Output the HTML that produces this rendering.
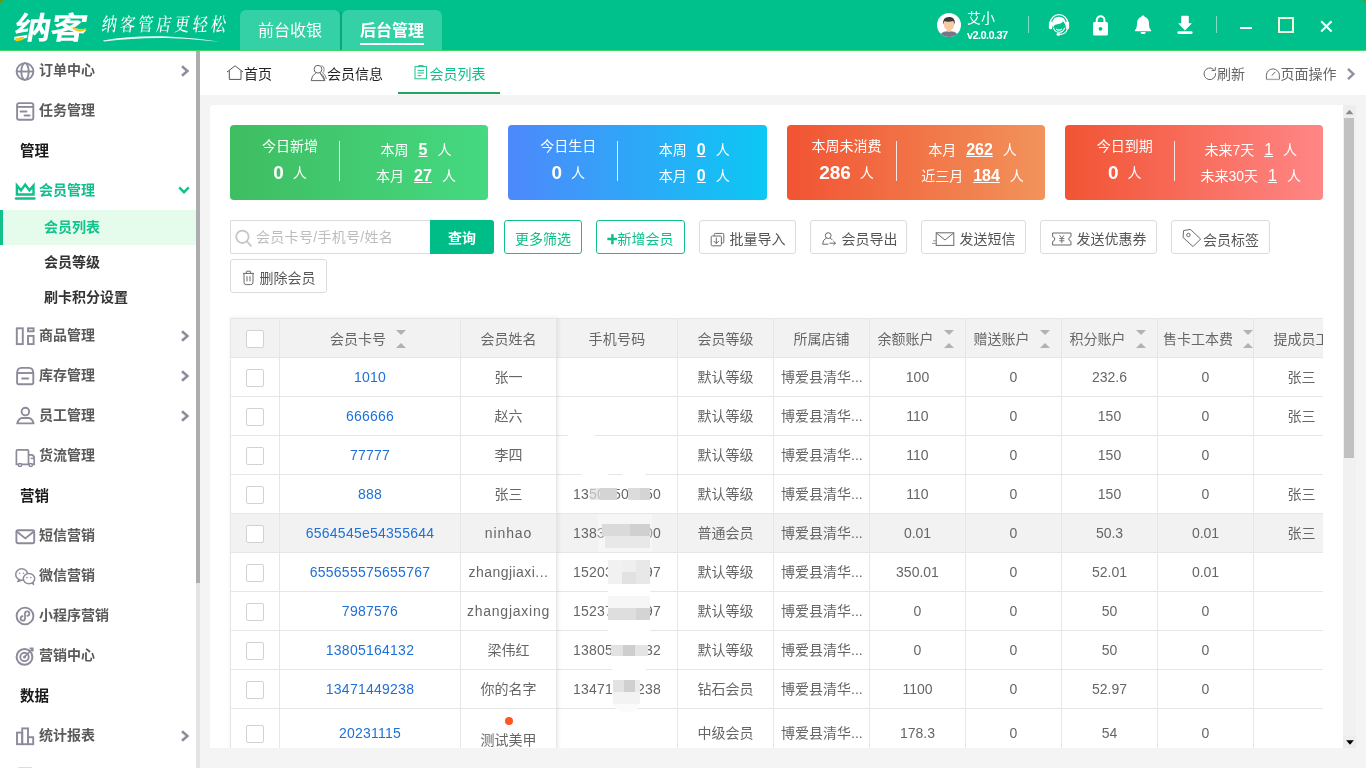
<!DOCTYPE html>
<html lang="zh-CN">
<head>
<meta charset="utf-8">
<title>会员列表</title>
<style>
*{box-sizing:border-box;margin:0;padding:0}
html,body{width:1366px;height:768px;overflow:hidden}
body{position:relative;background:#f4f4f4;font-family:"Liberation Sans","Noto Sans CJK SC",sans-serif;font-size:14px;color:#666;-webkit-font-smoothing:antialiased}
#root{position:absolute;left:0;top:0;width:1366px;height:768px;will-change:transform}
.abs{position:absolute}
svg{display:block;overflow:visible}
/* ---------- header ---------- */
#hd{position:absolute;left:0;top:0;width:1366px;height:50px;background:#00c08b;border-radius:5px 5px 0 0}
#hdline{position:absolute;left:0;top:50px;width:1366px;height:1px;background:#3dd56c}
.toptab{position:absolute;top:10px;height:40px;width:100px;background:#33d1a5;border-radius:6px 6px 0 0;color:#fff;font-size:16px;text-align:center;line-height:42px}
.toptab b{font-weight:700}
/* ---------- sidebar ---------- */
#side{position:absolute;left:0;top:51px;width:196px;height:717px;background:#fff;overflow:hidden}
#sbar{position:absolute;left:196px;top:51px;width:4px;height:717px;background:#e4e4e4}
#sbar i{position:absolute;left:0;top:0;width:4px;height:532px;background:#adadad}
.mi{position:absolute;left:0;width:196px;height:40px;line-height:40px;color:#5a5a5a;font-weight:700;font-size:14px}
.mi span{position:absolute;left:39px;top:0;white-space:nowrap}
.mi svg.ic{position:absolute;left:15px;top:11px;width:20px;height:20px}
.mi svg.ar{position:absolute;left:179px;top:15px;width:12px;height:12px}
.sec{position:absolute;left:20px;color:#1a1a1a;font-weight:700;font-size:14.5px;line-height:42px;height:40px}
.sub{position:absolute;left:0;width:196px;height:35px;line-height:35px;color:#333;font-weight:700}
.sub span{position:absolute;left:44px;top:0;white-space:nowrap}
/* ---------- page tabs ---------- */
#tabs{position:absolute;left:200px;top:51px;width:1166px;height:44px;background:#fff}
.pt{position:absolute;top:0;height:44px;line-height:46px;font-size:14px;color:#333;white-space:nowrap}
/* ---------- card ---------- */
#card{position:absolute;left:210px;top:105px;width:1133px;height:643px;background:#fff;border-radius:3px 0 0 0;overflow:hidden}
#vs{position:absolute;left:1343px;top:105px;width:13px;height:643px;background:#f1f1f1}

/* ---------- stat cards ---------- */
.st{position:absolute;top:20px;width:258.25px;height:75px;border-radius:4px;color:#fff;font-size:14px}
.st .l{position:absolute;left:0;top:0;width:120px;text-align:center}
.st .l .t{position:absolute;left:0;top:9px;width:120px;height:24px;line-height:24px;white-space:nowrap}
.st .l .n{position:absolute;left:0;top:34px;width:120px;height:28px;line-height:28px;white-space:nowrap}
.st .l .n b{font-size:19px;font-weight:700;margin-right:9px;vertical-align:-1px}
.st .dv{position:absolute;left:109px;top:16px;width:1px;height:40px;background:#fff;opacity:.85}
.st .r{position:absolute;left:110px;top:0;width:152px;text-align:center;white-space:nowrap}
.st .r div{position:absolute;left:0;width:152px;height:27px;line-height:27px}
.st .r b{font-size:16px;font-weight:700;text-decoration:underline;margin:0 10px;vertical-align:-.5px}
.st .r b.n{font-weight:400}

/* ---------- toolbar ---------- */
.btn{position:absolute;height:34px;border:1px solid #dcdcdc;border-radius:3px;background:#fff;color:#555;font-size:14px;white-space:nowrap}
.btn span{position:absolute;top:0;height:32px;line-height:36px}
.btn svg{position:absolute}
.btn.g{border-color:#12c08b;color:#0dbf8b}

/* ---------- table ---------- */
#tb{position:absolute;left:20px;top:213px;width:1093px;height:440px;overflow:hidden;border-left:1px solid #e6e6e6;border-top:1px solid #e6e6e6}
.tr{position:absolute;left:0;width:1120px;height:39px;border-bottom:1px solid #e6e6e6;background:#fff}
.tr.h{background:#f2f2f2}
.tr.hv{background:#f2f2f2}
.tr>div{position:absolute;top:0;height:100%;border-right:1px solid #e6e6e6;text-align:center;line-height:39px;white-space:nowrap;overflow:hidden;color:#666}
.c0{left:0;width:49px}.c1{left:49px;width:181px}.c2{left:230px;width:96px}.c3{left:326px;width:121px}.c4{left:447px;width:96px}
.c5{left:543px;width:96px}.c6{left:639px;width:96px}.c7{left:735px;width:96px}.c8{left:831px;width:96px}.c9{left:927px;width:96px}.c10{left:1023px;width:96px}
.c0 i{position:absolute;left:15px;top:10.5px;width:18px;height:18px;border:1px solid #d2d2d2;border-radius:2px;background:#fff}
.c1 a{color:#1e70d8;text-decoration:none;letter-spacing:.25px}
.tr>div.c5{text-align:left;padding-left:7px}
.tr.h>div.c5{text-align:center;padding-left:0}
.tr.h>div.c9{text-align:left;padding-left:5px}
.tr.h>div{line-height:40px}
.tr.t>div{line-height:48px}
.so{display:inline-block;position:relative;width:10px;height:19px;margin-left:10px;margin-right:4px;vertical-align:-5px}
.so:before{content:"";position:absolute;left:0;top:0;border:5px solid transparent;border-top:5px solid #b2b2b2;border-bottom:0}
.so:after{content:"";position:absolute;left:0;top:13px;border:5px solid transparent;border-bottom:5px solid #b2b2b2;border-top:0}
#fx{position:absolute;left:20px;top:213px;width:327px;height:440px;pointer-events:none;box-shadow:1px 0 4px rgba(0,0,0,.09)}
#blur i{position:absolute;display:block}
.c3{letter-spacing:.2px}
</style>
</head>
<body>
<div id="root">
<div class="abs" style="left:0;top:0;width:1366px;height:6px;background:#6f9500"></div>
<div id="hd">
  <div class="abs" id="logo" style="left:15px;top:4px;width:76px;height:44px;color:#fff;font-family:'Noto Sans CJK SC',sans-serif;font-weight:700;font-size:31px;line-height:44px;white-space:nowrap;transform-origin:0 50%;transform:scaleX(1.2) skewX(-8deg);letter-spacing:-1px">纳客</div>
  <svg class="abs" style="left:0;top:0" width="240" height="50" viewBox="0 0 240 50">
    <path d="M15 38.5 L24 36.5 L23 40 L16 41.5 Z" fill="#f5c518"/>
    <path d="M73 26.5 Q78 31 86 28 L85.5 30.5 Q78 33.5 72.5 28.5 Z" fill="#f5c518"/>
    <path d="M103 40.6 C125 36.5 150 35.6 172 36.8 C190 37.8 207 39.6 219 41.8 C205 40.2 190 38.8 172 38.2 C150 37.5 126 38.6 104 41.6 Z" fill="#fff" opacity=".92"/>
  </svg>
  <div class="abs" id="slogan" style="left:101.5px;top:10.5px;width:134px;height:24px;line-height:24px;color:#fff;font-family:'Noto Serif CJK SC','Noto Sans CJK SC',serif;font-weight:500;font-size:15px;letter-spacing:3.2px;white-space:nowrap;transform-origin:0 50%;transform:scaleY(1.25) skewX(-10deg)">纳客管店更轻松</div>
  <div class="abs" style="left:340px;top:12px;width:2px;height:38px;background:#0aa777"></div>
  <div class="toptab" style="left:240px">前台收银</div>
  <div class="toptab" style="left:342px"><b>后台管理</b><i class="abs" style="left:18px;top:33px;width:64px;height:2px;background:#fff"></i></div>
  <!-- avatar -->
  <svg class="abs" style="left:937px;top:13px" width="24" height="24" viewBox="0 0 24 24">
    <defs><clipPath id="avc"><circle cx="12" cy="12" r="12"/></clipPath></defs>
    <circle cx="12" cy="12" r="12" fill="#fff"/>
    <g clip-path="url(#avc)">
      <path d="M2.5 24 C3 19.5 7 18.3 12 18.3 C17 18.3 21 19.5 21.5 24 Z" fill="#77778a"/>
      <path d="M10 15 L14 15 L14 18.2 Q12 19.8 10 18.2 Z" fill="#f1bf95"/>
      <ellipse cx="12" cy="11.6" rx="5.2" ry="5.9" fill="#f6cba3"/>
      <path d="M6.3 11.5 C5.6 7 7.5 4 12 4 C16.5 4 18.4 6.6 17.7 11.5 C17 9.8 16.6 8.8 16.2 8 C13.5 9 9.5 9 7.4 8.3 C7 9.2 6.7 10.2 6.3 11.5 Z" fill="#3a3a3c"/>
    </g>
  </svg>
  <div class="abs" style="left:967px;top:8px;height:20px;line-height:20px;color:#fff;font-size:14px;white-space:nowrap">艾小</div>
  <div class="abs" style="left:967px;top:27px;height:16px;line-height:16px;color:#fff;font-size:11px;font-weight:700;letter-spacing:-.6px;white-space:nowrap">v2.0.0.37</div>
  <div class="abs" style="left:1028px;top:16px;width:1px;height:17px;background:#7fdcc2"></div>
  <div class="abs" style="left:1216px;top:16px;width:1px;height:17px;background:#7fdcc2"></div>
  <!-- headset -->
  <svg class="abs" style="left:1047px;top:12px" width="24" height="26" viewBox="0 0 24 26">
    <path d="M3.2 11.5 A8.8 8.8 0 0 1 20.8 11.5" fill="none" stroke="#fff" stroke-width="1.3"/>
    <rect x="1.9" y="9.6" width="3.4" height="7.6" rx="1.4" fill="#fff"/>
    <rect x="18.7" y="9.6" width="3.4" height="7.6" rx="1.4" fill="#fff"/>
    <path d="M5 12.5 C5 7.5 8 4.8 12 4.8 C16 4.8 19 7.5 19 12.5 C19 13 18.9 13.6 18.8 14.1 C18.2 12.2 17.3 10.6 15.8 9.3 C15.3 11.1 13.3 12 10.6 12.2 C8.4 12.4 7 13.4 6.6 15 C5.6 14.6 5 13.6 5 12.5 Z" fill="#fff"/>
    <path d="M6.4 15.6 C7.2 18.6 9.3 20.3 12 20.3 C14.6 20.3 16.7 18.8 17.6 16" fill="none" stroke="#fff" stroke-width="1.1"/>
    <path d="M9.4 17.2 Q12 19 14.6 17.2" fill="none" stroke="#fff" stroke-width="1.1" stroke-linecap="round"/>
    <path d="M20.4 16.5 C19.8 20 16.5 22.3 12.4 22.4" fill="none" stroke="#fff" stroke-width="1.2"/>
    <ellipse cx="11.4" cy="22.4" rx="1.9" ry="1.4" fill="#fff"/>
  </svg>
  <!-- lock -->
  <svg class="abs" style="left:1091px;top:13px" width="20" height="24" viewBox="0 0 20 24">
    <path d="M5.7 10 V7.2 A3.9 3.9 0 0 1 13.5 7.2 V10" fill="none" stroke="#fff" stroke-width="2"/>
    <rect x="2" y="9" width="15" height="13.6" rx="1.6" fill="#fff"/>
    <circle cx="9.5" cy="15.8" r="1.9" fill="#00bf8b"/>
  </svg>
  <!-- bell -->
  <svg class="abs" style="left:1133px;top:13px" width="20" height="24" viewBox="0 0 20 24">
    <path d="M10 2.4 C10.9 2.4 11.5 3 11.6 3.8 C14.6 4.7 16 7.2 16 10.4 C16 13.6 16.6 15.6 18.1 17.2 L18.1 18.2 L1.9 18.2 L1.9 17.2 C3.4 15.6 4 13.6 4 10.4 C4 7.2 5.4 4.7 8.4 3.8 C8.5 3 9.1 2.4 10 2.4 Z" fill="#fff"/>
    <path d="M7.8 18.9 H12.6 V19.6 Q12.6 20.9 11.3 20.9 H9.1 Q7.8 20.9 7.8 19.6 Z" fill="#fff"/>
  </svg>
  <!-- download -->
  <svg class="abs" style="left:1175px;top:13px" width="20" height="24" viewBox="0 0 20 24">
    <path d="M6.2 3.8 Q6.2 2.8 7.2 2.8 H12.8 Q13.8 2.8 13.8 3.8 V10.3 H16.9 L10 17.4 L3.1 10.3 H6.2 Z" fill="#fff"/>
    <rect x="2.4" y="18.3" width="15.2" height="2.8" rx="1.3" fill="#fff"/>
  </svg>
  <!-- window controls -->
  <div class="abs" style="left:1240px;top:27px;width:12px;height:2px;background:#fff"></div>
  <div class="abs" style="left:1278px;top:17px;width:16px;height:16px;border:2px solid #f3f7d8"></div>
  <svg class="abs" style="left:1320px;top:20px" width="13" height="13" viewBox="0 0 13 13"><path d="M1.2 1.2 L11.6 11.6 M11.6 1.2 L1.2 11.6" stroke="#fff" stroke-width="2.1" fill="none"/></svg>
</div>
<div id="hdline"></div>
<div id="side">
<div class="mi" style="top:-1px"><svg class="ic" viewBox="0 0 20 20" fill="none" stroke="#8b8b9c" stroke-width="1.9"><circle cx="10" cy="10.5" r="8.4"/><ellipse cx="10" cy="10.5" rx="3.7" ry="8.4"/><path d="M1.6 10.5 H18.4"/></svg><span>订单中心</span><svg class="ar" viewBox="0 0 12 12"><path d="M3 1.2 L8.4 6 L3 10.8" fill="none" stroke="#8e8e9c" stroke-width="2.6"/></svg></div>
<div class="mi" style="top:39px"><svg class="ic" viewBox="0 0 20 20" fill="none" stroke="#8b8b9c" stroke-width="1.9"><rect x="2.1" y="2.1" width="16.2" height="16.6" rx="2"/><path d="M2.1 5.9 H18.3"/><path d="M5.6 10.6 H11.4 M9.6 14.6 H14.6" stroke-linecap="round" stroke-width="2"/></svg><span>任务管理</span></div>
<div class="sec" style="top:79px">管理</div>
<div class="mi" style="top:119px;color:#0fc08c"><svg class="ic" viewBox="0 0 20 20" fill="none" stroke="#0fc08c" stroke-width="1.9"><path d="M1.9 4.6 L6 9.4 L10.2 3.5 L14.4 9.4 L18.5 4.6 V13.5 H1.9 Z" stroke-width="2.4" stroke-linejoin="miter"/><path d="M1 17.6 H19.4" stroke-width="2.5" stroke-linecap="round"/></svg><span>会员管理</span><svg class="abs" style="left:178px;top:15px" width="12" height="12" viewBox="0 0 12 12"><path d="M1.2 2.4 L6 7.2 L10.8 2.4" fill="none" stroke="#0fc08c" stroke-width="2.4"/></svg></div>
<div class="sub" style="top:159px;background:#e5fcec;color:#12c38c"><i class="abs" style="left:0;top:0;width:3px;height:35px;background:#12c08b"></i><span>会员列表</span></div>
<div class="sub" style="top:194px"><span>会员等级</span></div>
<div class="sub" style="top:229px"><span>刷卡积分设置</span></div>
<div class="mi" style="top:264px"><svg class="ic" viewBox="0 0 20 20" fill="none" stroke="#8b8b9c" stroke-width="1.9"><rect x="1.8" y="2.3" width="6" height="15.8"/><rect x="13" y="2.3" width="5.6" height="3"/><rect x="13" y="9.9" width="5.6" height="8.2"/></svg><span>商品管理</span><svg class="ar" viewBox="0 0 12 12"><path d="M3 1.2 L8.4 6 L3 10.8" fill="none" stroke="#8e8e9c" stroke-width="2.6"/></svg></div>
<div class="mi" style="top:304px"><svg class="ic" viewBox="0 0 20 20" fill="none" stroke="#8b8b9c" stroke-width="1.9"><path d="M2.1 7 Q2.3 2 6.4 1.9 H14 Q18.1 2 18.3 7 V16.4 Q18.3 18.2 16.5 18.2 H3.9 Q2.1 18.2 2.1 16.4 Z"/><path d="M2.1 7 H18.3"/><path d="M7.2 12.4 H13.2" stroke-linecap="round" stroke-width="2"/></svg><span>库存管理</span><svg class="ar" viewBox="0 0 12 12"><path d="M3 1.2 L8.4 6 L3 10.8" fill="none" stroke="#8e8e9c" stroke-width="2.6"/></svg></div>
<div class="mi" style="top:344px"><svg class="ic" viewBox="0 0 20 20" fill="none" stroke="#8b8b9c" stroke-width="1.9"><circle cx="10.4" cy="5.6" r="3.8"/><path d="M2.2 17.4 Q3.6 12.2 7.2 12 H13.6 Q17.2 12.2 18.6 17.4 Z" stroke-linejoin="round"/></svg><span>员工管理</span><svg class="ar" viewBox="0 0 12 12"><path d="M3 1.2 L8.4 6 L3 10.8" fill="none" stroke="#8e8e9c" stroke-width="2.6"/></svg></div>
<div class="mi" style="top:384px"><svg class="ic" viewBox="0 0 20 20" fill="none" stroke="#8b8b9c" stroke-width="1.9"><path d="M1.4 5 Q1.4 3.9 2.5 3.9 H12.4 Q13.5 3.9 13.5 5 V18.4 H1.4 Z" stroke-width="1.7"/><path d="M13.5 8.8 H16.4 Q19.2 9 19.2 12 V18.4 H13.5" stroke-width="1.7"/><path d="M15.6 12.4 H19.2" stroke-width="1.4"/><circle cx="5" cy="19" r="1.6" fill="#fff" stroke-width="1.5"/><circle cx="15.8" cy="19" r="1.6" fill="#fff" stroke-width="1.5"/></svg><span>货流管理</span></div>
<div class="sec" style="top:424px">营销</div>
<div class="mi" style="top:464px"><svg class="ic" viewBox="0 0 20 20" fill="none" stroke="#8b8b9c" stroke-width="1.9"><rect x="1.4" y="4.2" width="17.8" height="13" rx="1.6"/><path d="M1.8 5.6 L10.3 12.4 L18.8 5.6"/></svg><span>短信营销</span></div>
<div class="mi" style="top:504px"><svg class="ic" viewBox="0 0 20 20" fill="none" stroke="#8b8b9c" stroke-width="1.9"><path d="M4.4 13.3 L2.6 15.6 L6 14.6" stroke-width="1.3" stroke-linejoin="round"/><ellipse cx="6.7" cy="8.5" rx="6" ry="5.7" stroke-width="1.5" fill="#fff"/><path d="M16.6 16.8 L18.6 18.6 L18 15.8" stroke-width="1.3" stroke-linejoin="round"/><ellipse cx="14" cy="12.6" rx="5.7" ry="5.1" stroke-width="1.5" fill="#fff"/><circle cx="4.6" cy="7.2" r=".8" fill="#8b8b9c" stroke="none"/><circle cx="8.4" cy="7.2" r=".8" fill="#8b8b9c" stroke="none"/><circle cx="12" cy="11.6" r=".8" fill="#8b8b9c" stroke="none"/><circle cx="15.8" cy="11.6" r=".8" fill="#8b8b9c" stroke="none"/></svg><span>微信营销</span></div>
<div class="mi" style="top:544px"><svg class="ic" viewBox="0 0 20 20" fill="none" stroke="#8b8b9c" stroke-width="1.9"><circle cx="10" cy="10" r="8.4" stroke-width="1.9"/><path d="M10 12.4 Q10 14.6 7.8 14.6 Q5.6 14.6 5.6 12.5 Q5.6 10.5 7.6 10.2 M10 12.4 V7.6 Q10 5.4 12.2 5.4 Q14.4 5.4 14.4 7.5 Q14.4 9.5 12.4 9.8" stroke-width="1.8" stroke-linecap="round"/></svg><span>小程序营销</span></div>
<div class="mi" style="top:584px"><svg class="ic" viewBox="0 0 20 20" fill="none" stroke="#8b8b9c" stroke-width="1.9"><circle cx="9.5" cy="10.9" r="7.9" stroke-width="2"/><circle cx="9.5" cy="10.9" r="4.2" stroke-width="1.9"/><circle cx="9.5" cy="10.9" r="1.5" fill="#8b8b9c" stroke="none"/><path d="M9.5 10.9 L17.4 3 M14.6 2.4 H17.8 V5.6" stroke-width="1.6"/></svg><span>营销中心</span></div>
<div class="sec" style="top:624px">数据</div>
<div class="mi" style="top:664px"><svg class="ic" viewBox="0 0 20 20" fill="none" stroke="#8b8b9c" stroke-width="1.9"><rect x="2" y="6.6" width="5.2" height="11.6"/><rect x="7.2" y="2.4" width="5.8" height="15.8"/><rect x="13" y="11.2" width="5.2" height="7"/></svg><span>统计报表</span><svg class="ar" viewBox="0 0 12 12"><path d="M3 1.2 L8.4 6 L3 10.8" fill="none" stroke="#8e8e9c" stroke-width="2.6"/></svg></div>
<div class="abs" style="left:17px;top:716px;width:16px;height:4px;border:1px solid #dcdce4;border-radius:2px"></div>
</div>
<div id="sbar"><i></i></div>
<div id="tabs">
  <svg class="abs" style="left:26px;top:14px" width="18" height="16" viewBox="0 0 18 16" fill="none" stroke="#555" stroke-width="1"><path d="M1 7 L9.1 .8 L17 7"/><path d="M3.3 5.6 V14.4 H15 V5.6"/></svg>
  <div class="pt" style="left:44px;color:#222">首页</div>
  <svg class="abs" style="left:110px;top:13px" width="18" height="18" viewBox="0 0 18 18" fill="none" stroke="#666" stroke-width="1"><circle cx="8" cy="5.2" r="3.9"/><path d="M1.2 16.6 Q1.6 11 5.8 9.2 M10.2 9.2 Q14.4 11 14.8 16.6 Z M1.2 16.6 H14.8"/><path d="M11.6 1.6 Q14.4 2.4 14.2 5.6 Q14 7.8 12.6 9 Q15.8 10.6 16.4 15" stroke="#888"/></svg>
  <div class="pt" style="left:127px;color:#222">会员信息</div>
  <svg class="abs" style="left:214px;top:14px" width="14" height="15" viewBox="0 0 14 15" fill="none" stroke="#1ac48c" stroke-width="1"><rect x="1" y="1.6" width="11.6" height="12.2"/><path d="M4.4 1.6 V.6 H9.2 V1.6" /><path d="M3.6 5.4 H10 M3.6 8 H10 M3.6 10.6 H7.4"/></svg>
  <div class="pt" style="left:229.5px;color:#0dbf8b">会员列表</div>
  <div class="abs" style="left:198px;top:41px;width:102px;height:2px;background:#1fa85c"></div>
  <svg class="abs" style="left:1003px;top:16px" width="14" height="14" viewBox="0 0 14 14" fill="none" stroke="#666" stroke-width="1"><path d="M10.6 2.4 A5.8 5.8 0 1 0 12.6 6.2"/><path d="M8.6 3.6 L12.2 3.4 L12.4 .2" stroke-width="1"/></svg>
  <div class="pt" style="left:1017px;color:#666">刷新</div>
  <svg class="abs" style="left:1065px;top:16px" width="16" height="14" viewBox="0 0 16 14" fill="none" stroke="#666" stroke-width="1"><path d="M1.4 12 V8.4 A6.4 6.4 0 0 1 14.4 8.4 V12"/><path d="M6.8 8.6 L10.4 4.8"/><path d="M1 12.4 H14.8" stroke="#aaa" stroke-width="1.4"/></svg>
  <div class="pt" style="left:1080.5px;color:#666">页面操作</div>
  <svg class="abs" style="left:1146px;top:17px" width="10" height="12" viewBox="0 0 10 12"><path d="M2 .8 L7.4 6 L2 11.2" fill="none" stroke="#8e8ea0" stroke-width="2.4"/></svg>
</div>
<div id="card">
<div class="st" style="left:20px;background:linear-gradient(90deg,#3fbd61,#45d981)">
  <div class="l"><div class="t">今日新增</div><div class="n"><b>0</b>人</div></div><i class="dv"></i>
  <div class="r"><div style="top:11px">本周<b>5</b>人</div><div style="top:37px">本月<b>27</b>人</div></div>
</div>
<div class="st" style="left:298.25px;background:linear-gradient(90deg,#4e88fb,#0cc8f4)">
  <div class="l"><div class="t">今日生日</div><div class="n"><b>0</b>人</div></div><i class="dv"></i>
  <div class="r"><div style="top:11px">本周<b>0</b>人</div><div style="top:37px">本月<b>0</b>人</div></div>
</div>
<div class="st" style="left:576.5px;background:linear-gradient(90deg,#f15433,#f2935b)">
  <div class="l"><div class="t">本周未消费</div><div class="n"><b>286</b>人</div></div><i class="dv"></i>
  <div class="r"><div style="top:11px">本月<b>262</b>人</div><div style="top:37px">近三月<b>184</b>人</div></div>
</div>
<div class="st" style="left:854.75px;background:linear-gradient(90deg,#f15433,#ff8686)">
  <div class="l"><div class="t">今日到期</div><div class="n"><b>0</b>人</div></div><i class="dv"></i>
  <div class="r"><div style="top:11px">未来7天<b class="n">1</b>人</div><div style="top:37px">未来30天<b class="n">1</b>人</div></div>
</div>
<!-- toolbar -->
<div class="abs" style="left:20px;top:115px;width:200px;height:34px;border:1px solid #dcdcdc;border-right:0;border-radius:2px 0 0 2px;background:#fff">
  <svg class="abs" style="left:4px;top:8px" width="18" height="18" viewBox="0 0 18 18" fill="none" stroke="#c6c6c6" stroke-width="1.8"><circle cx="7.4" cy="7.8" r="6.2"/><path d="M11.8 12.4 L16 16.8" stroke-linecap="round"/></svg>
  <span class="abs" style="left:25px;top:0;height:32px;line-height:32px;color:#bdbdbd;white-space:nowrap;letter-spacing:.3px">会员卡号/手机号/姓名</span>
</div>
<div class="abs" style="left:220px;top:115px;width:64px;height:34px;background:#00bd88;border-radius:0 3px 3px 0;color:#fff;font-weight:700;text-align:center;line-height:37px">查询</div>
<div class="btn g" style="left:294px;top:115px;width:78px"><span style="left:10px">更多筛选</span></div>
<div class="btn g" style="left:386px;top:115px;width:89px"><span style="left:10px"><b style="font-family:'Liberation Sans',sans-serif;font-size:18px;font-weight:700;-webkit-text-stroke:.5px #0dbf8b;vertical-align:-1px;display:inline-block;width:10.6px;margin-right:0">+</b>新增会员</span></div>
<div class="btn" style="left:489px;top:115px;width:97px">
  <svg style="left:10px;top:10.5px" width="16" height="16" viewBox="0 0 16 16" fill="none" stroke="#6a6a6a" stroke-width="1"><path d="M4.2 4 V2.6 Q4.2 1.4 5.4 1.4 H12.6 Q13.8 1.4 13.8 2.6 V9.8 Q13.8 11 12.6 11 H11.4"/><rect x="1.2" y="4" width="10.2" height="9.8" rx="1.2"/><path d="M6.3 5.6 V11.4 M3.8 9 L6.3 11.6 L8.8 9"/></svg>
  <span style="left:29.5px">批量导入</span></div>
<div class="btn" style="left:600px;top:115px;width:97px">
  <svg style="left:10px;top:10px" width="16" height="16" viewBox="0 0 16 16" fill="none" stroke="#6a6a6a" stroke-width="1"><circle cx="7.2" cy="4.6" r="2.9"/><path d="M5.4 7 Q1.8 8.6 1.6 13.2 H7.4 M9 7 Q10.6 7.8 11.4 9.2"/><path d="M8.6 12.2 H14.4 M12.4 10.2 L14.5 12.2 L12.4 14.2"/></svg>
  <span style="left:30.5px">会员导出</span></div>
<div class="btn" style="left:711px;top:115px;width:105px">
  <svg style="left:9px;top:10px" width="24" height="16" viewBox="0 0 24 16" fill="none" stroke="#6a6a6a" stroke-width="1"><rect x="5.2" y="1.8" width="17.6" height="12.6"/><path d="M5.6 2.2 L14 9 L22.4 2.2"/><path d="M2 9.8 H5 M1 12.4 H5" stroke="#999"/></svg>
  <span style="left:37.5px">发送短信</span></div>
<div class="btn" style="left:830px;top:115px;width:117px">
  <svg style="left:10px;top:10px" width="22" height="16" viewBox="0 0 22 16" fill="none" stroke="#6a6a6a" stroke-width="1"><path d="M1.6 2 H20 V5.6 Q17.8 6 17.8 8 Q17.8 10 20 10.4 V14 H1.6 V10.4 Q3.8 10 3.8 8 Q3.8 6 1.6 5.6 Z"/><path d="M8.6 4.2 L10.8 7.2 L13 4.2 M10.8 7.2 V12.2 M8.2 7.6 H13.4 M8.2 9.8 H13.4" stroke-width=".9"/></svg>
  <span style="left:35.5px">发送优惠券</span></div>
<div class="btn" style="left:961px;top:115px;width:99px">
  <svg style="left:9px;top:6px" width="22" height="22" viewBox="0 0 22 22" fill="none" stroke="#6a6a6a" stroke-width="1"><path d="M2.6 3.6 L9.4 2.4 L19.6 12 L12 19.6 L2 10.4 Z" stroke-linejoin="round"/><circle cx="7.4" cy="8" r="1.7"/></svg>
  <span style="left:31px;line-height:38px">会员标签</span></div>
<div class="btn" style="left:20px;top:154px;width:97px">
  <svg style="left:11px;top:10px" width="13" height="16" viewBox="0 0 13 16" fill="none" stroke="#6a6a6a" stroke-width="1"><path d="M1 3.4 H12 M4.4 3.2 V1.8 Q4.4 1.2 5 1.2 H8 Q8.6 1.2 8.6 1.8 V3.2"/><path d="M2 3.6 V12.4 Q2 14.6 4.2 14.6 H8.8 Q11 14.6 11 12.4 V3.6"/><path d="M5 6.2 V11.4 M8 6.2 V11.4"/></svg>
  <span style="left:28.5px">删除会员</span></div>
<div id="tb">
<div class="tr h" style="top:0"><div class="c0"><i></i></div><div class="c1">会员卡号<span class="so"></span></div><div class="c2">会员姓名</div><div class="c3">手机号码</div><div class="c4">会员等级</div><div class="c5">所属店铺</div><div class="c6">余额账户<span class="so"></span></div><div class="c7">赠送账户<span class="so"></span></div><div class="c8">积分账户<span class="so"></span></div><div class="c9">售卡工本费<span class="so"></span></div><div class="c10">提成员工</div></div>
<div class="tr" style="top:39px"><div class="c0"><i></i></div><div class="c1"><a>1010</a></div><div class="c2">张一</div><div class="c3"></div><div class="c4">默认等级</div><div class="c5">博爱县清华...</div><div class="c6">100</div><div class="c7">0</div><div class="c8">232.6</div><div class="c9">0</div><div class="c10">张三</div></div>
<div class="tr" style="top:78px"><div class="c0"><i></i></div><div class="c1"><a>666666</a></div><div class="c2">赵六</div><div class="c3"></div><div class="c4">默认等级</div><div class="c5">博爱县清华...</div><div class="c6">110</div><div class="c7">0</div><div class="c8">150</div><div class="c9">0</div><div class="c10">张三</div></div>
<div class="tr" style="top:117px"><div class="c0"><i></i></div><div class="c1"><a>77777</a></div><div class="c2">李四</div><div class="c3"></div><div class="c4">默认等级</div><div class="c5">博爱县清华...</div><div class="c6">110</div><div class="c7">0</div><div class="c8">150</div><div class="c9">0</div><div class="c10"></div></div>
<div class="tr" style="top:156px"><div class="c0"><i></i></div><div class="c1"><a>888</a></div><div class="c2">张三</div><div class="c3">13500500050</div><div class="c4">默认等级</div><div class="c5">博爱县清华...</div><div class="c6">110</div><div class="c7">0</div><div class="c8">150</div><div class="c9">0</div><div class="c10">张三</div></div>
<div class="tr hv" style="top:195px"><div class="c0"><i></i></div><div class="c1"><a>6564545e54355644</a></div><div class="c2" style="letter-spacing:.9px">ninhao</div><div class="c3">13830000000</div><div class="c4">普通会员</div><div class="c5">博爱县清华...</div><div class="c6">0.01</div><div class="c7">0</div><div class="c8">50.3</div><div class="c9">0.01</div><div class="c10">张三</div></div>
<div class="tr" style="top:234px"><div class="c0"><i></i></div><div class="c1"><a>655655575655767</a></div><div class="c2" style="letter-spacing:.45px">zhangjiaxi...</div><div class="c3">15203000097</div><div class="c4">默认等级</div><div class="c5">博爱县清华...</div><div class="c6">350.01</div><div class="c7">0</div><div class="c8">52.01</div><div class="c9">0.01</div><div class="c10"></div></div>
<div class="tr" style="top:273px"><div class="c0"><i></i></div><div class="c1"><a>7987576</a></div><div class="c2" style="letter-spacing:.75px">zhangjaxing</div><div class="c3">15237000097</div><div class="c4">默认等级</div><div class="c5">博爱县清华...</div><div class="c6">0</div><div class="c7">0</div><div class="c8">50</div><div class="c9">0</div><div class="c10"></div></div>
<div class="tr" style="top:312px"><div class="c0"><i></i></div><div class="c1"><a>13805164132</a></div><div class="c2">梁伟红</div><div class="c3">13805000032</div><div class="c4">默认等级</div><div class="c5">博爱县清华...</div><div class="c6">0</div><div class="c7">0</div><div class="c8">50</div><div class="c9">0</div><div class="c10"></div></div>
<div class="tr" style="top:351px"><div class="c0"><i></i></div><div class="c1"><a>13471449238</a></div><div class="c2">你的名字</div><div class="c3">13471000238</div><div class="c4">钻石会员</div><div class="c5">博爱县清华...</div><div class="c6">1100</div><div class="c7">0</div><div class="c8">52.97</div><div class="c9">0</div><div class="c10"></div></div>
<div class="tr t" style="top:390px;height:49px"><div class="c0"><i style="top:15.5px"></i></div><div class="c1"><a>20231115</a></div><div class="c2"><i style="position:absolute;left:44px;top:7.5px;width:8px;height:8px;border-radius:50%;background:#ff5722"></i><span style="position:absolute;left:0;top:20px;width:95px;height:22px;line-height:22px">测试美甲</span></div><div class="c3"></div><div class="c4">中级会员</div><div class="c5">博爱县清华...</div><div class="c6">178.3</div><div class="c7">0</div><div class="c8">54</div><div class="c9">0</div><div class="c10"></div></div>
</div>
<div id="fx"></div>
<div id="blur"><i style="left:358px;top:322px;width:27px;height:13px;background:#fff;border-radius:6px"></i><i style="left:370px;top:358px;width:29px;height:13px;background:#fff;border-radius:5px"></i><i style="left:412px;top:359px;width:24px;height:12px;background:#fff;border-radius:8px 8px 3px 3px"></i><i style="left:380px;top:383px;width:10px;height:12px;background:rgba(222,222,222,.72)"></i><i style="left:390px;top:383px;width:17px;height:12px;background:#d4d4d4"></i><i style="left:418px;top:383px;width:12px;height:12px;background:#dcdcdc"></i><i style="left:430px;top:383px;width:10px;height:12px;background:#d4d4d4"></i><i style="left:388px;top:409px;width:54px;height:38px;background:rgba(255,255,255,.35)"></i><i style="left:392px;top:419px;width:28px;height:12px;background:#dadada"></i><i style="left:420px;top:419px;width:20px;height:12px;background:#d0d0d0"></i><i style="left:395px;top:431px;width:45px;height:12px;background:#e8e8e8"></i><i style="left:398px;top:448px;width:42px;height:91px;background:#fff"></i><i style="left:402px;top:551px;width:34px;height:24px;background:#fff"></i><i style="left:403px;top:587px;width:27px;height:20px;background:#fbfbfb;border-radius:0 0 10px 10px"></i><i style="left:398px;top:455px;width:14px;height:24px;background:#f1f1f1"></i><i style="left:412px;top:455px;width:14px;height:12px;background:#efefef"></i><i style="left:412px;top:467px;width:14px;height:12px;background:#e2e2e2"></i><i style="left:426px;top:455px;width:14px;height:24px;background:#e8e8e8"></i><i style="left:398px;top:491px;width:42px;height:12px;background:#f6f6f6"></i><i style="left:398px;top:503px;width:28px;height:12px;background:#dedede"></i><i style="left:426px;top:503px;width:14px;height:12px;background:#d4d4d4"></i><i style="left:401px;top:540px;width:12px;height:11px;background:#e2e2e2"></i><i style="left:413px;top:540px;width:12px;height:11px;background:#cecece"></i><i style="left:425px;top:540px;width:13px;height:11px;background:#e4e4e4"></i><i style="left:403px;top:575px;width:11px;height:12px;background:#e2e2e2"></i><i style="left:414px;top:575px;width:11px;height:12px;background:#d0d0d0"></i><i style="left:425px;top:575px;width:5px;height:12px;background:#ececec"></i><i style="left:403px;top:587px;width:27px;height:12px;background:#f3f3f3"></i></div>
</div>
<div id="vs">
  <div class="abs" style="left:0;top:0;width:13px;height:13px;background:#ededed"></div>
  <svg class="abs" style="left:2px;top:4px" width="9" height="6" viewBox="0 0 9 6"><path d="M.6 5.2 L4.5 .8 L8.4 5.2 Z" fill="#8a8a8a"/></svg>
  <div class="abs" style="left:1px;top:13px;width:10px;height:340px;background:#c1c1c1"></div>
  <div class="abs" style="left:0;top:631px;width:13px;height:12px;background:#ededed"></div>
  <svg class="abs" style="left:2.5px;top:634.6px" width="8" height="5" viewBox="0 0 8 5"><path d="M.2 .2 L4 4.8 L7.8 .2 Z" fill="#000"/></svg>
</div>
</div>
</body>
</html>
